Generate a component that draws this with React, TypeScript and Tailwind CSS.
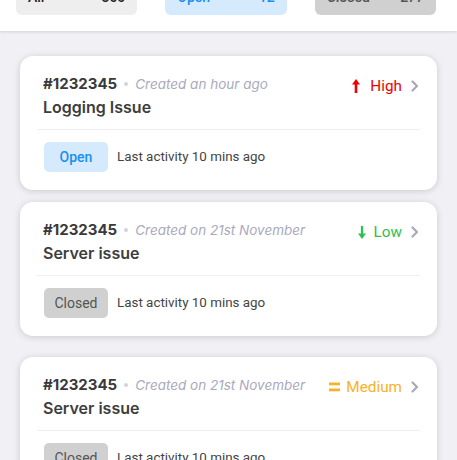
import React from "react";

type Priority = "high" | "low" | "medium";

const Chevron = () => (
  <svg width="8" height="12" viewBox="0 0 8 12" className="shrink-0">
    <path d="M1.5 1.5 L6 6 L1.5 10.5" fill="none" stroke="#a9a8bc" strokeWidth="2.2" strokeLinecap="round" strokeLinejoin="round" />
  </svg>
);

const PriorityIcon = ({ p }: { p: Priority }) => {
  if (p === "high")
    return (
      <svg width="8" height="14" viewBox="0 0 8 14">
        <path d="M4 0 L8 5.5 L5.3 5.5 L5.3 14 L2.7 14 L2.7 5.5 L0 5.5 Z" fill="#f00000" />
      </svg>
    );
  if (p === "low")
    return (
      <svg width="8" height="13" viewBox="0 0 8 13">
        <path d="M4 13 L8 7.5 L5.1 7.5 L5.1 0 L2.9 0 L2.9 7.5 L0 7.5 Z" fill="#2ec14c" />
      </svg>
    );
  return (
    <svg width="11" height="10" viewBox="0 0 11 10">
      <rect x="0" y="0.5" width="11" height="2.8" fill="#fbb126" />
      <rect x="0" y="6.5" width="11" height="2.8" fill="#fbb126" />
    </svg>
  );
};

const prioText: Record<Priority, { label: string; cls: string; gap: string }> = {
  high: { label: "High", cls: "text-[#f00000]", gap: "gap-[10px]" },
  low: { label: "Low", cls: "text-[#2ec14c]", gap: "gap-[8px]" },
  medium: { label: "Medium", cls: "text-[#fbb126]", gap: "gap-[6px]" },
};

function Card({
  created,
  title,
  priority,
  status,
  className,
}: {
  created: string;
  title: string;
  priority: Priority;
  status: "open" | "closed";
  className?: string;
}) {
  const p = prioText[priority];
  return (
    <div className={"mx-5 rounded-[13px] bg-white px-[17px] pt-[18px] pb-[18px] shadow-[0_1px_7px_rgba(0,0,0,0.16)] " + (className ?? "")}>
      <div className="flex items-center pl-[6px] pr-[1px]">
        <div className="flex min-w-0 flex-1 items-center">
          <span className="font-['Inter'] text-[15px] font-bold leading-5 text-[#3a3a3a]">#1232345</span>
          <span className="mx-[7px] h-[4px] w-[4px] rounded-full bg-[#d4d4d8]" />
          <span className="font-['Inter'] text-[13.5px] italic leading-5 text-[#aaa9bd]">{created}</span>
        </div>
        <div className={"flex translate-y-[2px] items-center " + p.gap}>
          <PriorityIcon p={priority} />
          <span className={"font-['Roboto'] text-[15.3px] leading-5 " + p.cls}>{p.label}</span>
        </div>
        <div className="ml-[9px] flex translate-y-[2px] items-center">
          <Chevron />
        </div>
      </div>
      <div className="mt-[1px] pl-[6px] font-['Inter'] text-[16px] font-semibold leading-6 text-[#3d3d3d]">{title}</div>
      <div className="mt-[10px] h-px bg-[#efeff2]" />
      <div className="mt-3 flex items-center pl-[7px]">
        {status === "open" ? (
          <span className="flex h-[30px] w-16 items-center justify-center rounded-[5px] bg-[#d5ebfd] font-['Roboto'] text-[14px] font-medium text-[#1a8ef2]">
            Open
          </span>
        ) : (
          <span className="flex h-[30px] w-16 items-center justify-center rounded-[5px] bg-[#d0d0d0] font-['Roboto'] text-[14px] text-[#555555]">
            Closed
          </span>
        )}
        <span className="ml-[9px] font-['Roboto'] text-[13.4px] text-[#444444]">Last activity 10 mins ago</span>
      </div>
    </div>
  );
}

export default function App() {
  return (
    <div className="h-[460px] w-[457px] overflow-hidden bg-[#f1f0f5]">
      <div className="relative z-10 -mt-[33px] bg-white pt-3 pb-4 pl-4 pr-[21px] shadow-[0_1px_3px_rgba(0,0,0,0.13)]">
        <div className="grid grid-cols-3 gap-7">
          <div className="flex h-9 items-center justify-between rounded-[6px] bg-[#eeeeee] px-3 font-['Roboto'] text-[14px] font-medium text-[#222222]">
            <span>All</span>
            <span>300</span>
          </div>
          <div className="flex h-9 items-center justify-between rounded-[6px] bg-[#d5ebfd] px-3 font-['Roboto'] text-[14px] font-medium text-[#1a8ef2]">
            <span>Open</span>
            <span>12</span>
          </div>
          <div className="flex h-9 items-center justify-between rounded-[6px] bg-[#d0d0d0] px-3 font-['Roboto'] text-[14px] font-medium text-[#555555]">
            <span>Closed</span>
            <span>277</span>
          </div>
        </div>
      </div>
      <div className="pt-[25px]">
        <Card created="Created an hour ago" title="Logging Issue" priority="high" status="open" />
        <Card className="mt-3" created="Created on 21st November" title="Server issue" priority="low" status="closed" />
        <Card className="mt-[21px]" created="Created on 21st November" title="Server issue" priority="medium" status="closed" />
      </div>
    </div>
  );
}
